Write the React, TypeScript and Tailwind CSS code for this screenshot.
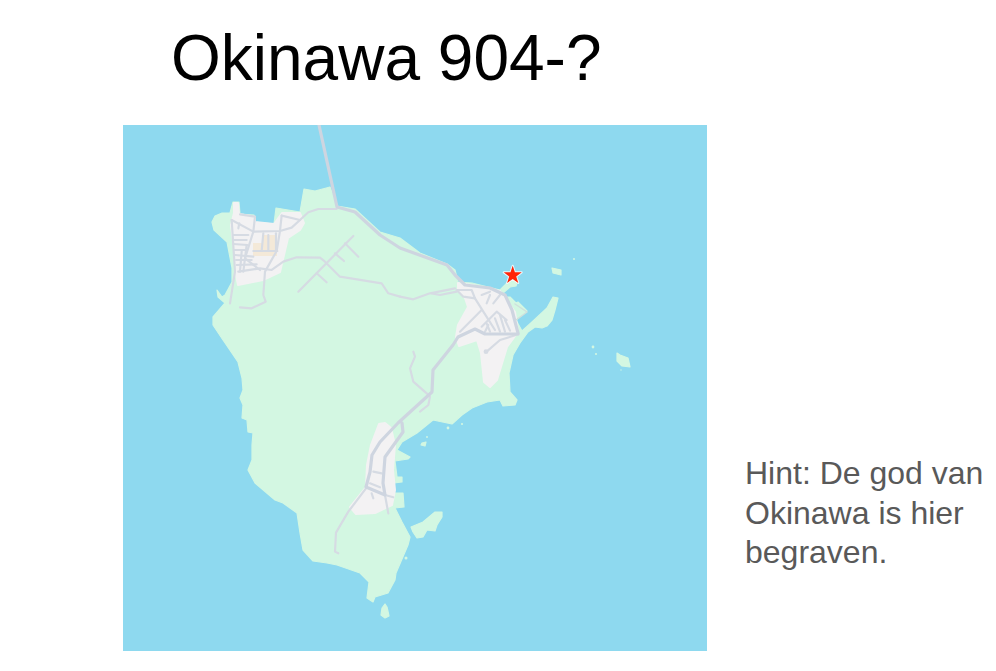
const COAST =
  "M233 202 L239 202 L240 214 L254 215 L255 222 L274 224 L276 208 L300 212 L304 189 L315 191 L330 187 L337 206 L355 209 L380 232 L400 238 L420 253 L447 264 L455 270 L458 282 L472 283 L500 290 L503 287 L508 282 L518 280 L516 286 L510 287 L503 293 L505 297 L510 297 L516 303 L518 302 L527 311 L516 320 L522 331 L532 322 L547 308 L553 297 L558 298 L555 310 L552 320 L547 326 L542 328 L535 327 L528 332 L520 343 L513 355 L509 373 L510 392 L517 400 L515 405 L503 406 L500 400 L487 402 L472 408 L462 415 L452 424 L433 420 L417 433 L402 442 L397 450 L410 457 L408 459 L395 461 L397 477 L402 477 L402 482 L394 483 L394 493 L403 493 L404 507 L395 508 L402 522 L410 537 L408 545 L396 573 L395 580 L388 593 L375 597 L373 602 L367 598 L369 582 L360 573 L337 565 L327 563 L313 561 L303 550 L300 533 L297 513 L283 503 L275 500 L255 483 L248 470 L252 460 L252 445 L253 433 L248 432 L247 420 L242 418 L243 405 L240 398 L243 390 L242 378 L238 362 L223 340 L213 325 L213 317 L225 303 L218 297 L217 290 L222 297 L225 295 L232 282 L232 268 L227 242 L214 230 L212 222 L215 216 L222 213 L230 213 Z";

const ISLANDS = [
  "M552 268 L561 270 L561 275 L553 273 Z",
  "M617 353 L620 355 L628 358 L630 367 L622 366 L617 361 Z",
  "M411 527 L423 522 L435 512 L442 512 L442 517 L437 525 L435 531 L427 530 L423 537 L417 538 L413 532 Z",
  "M422 443 L426 442 L425 446 L421 445 Z",
  "M385 604 L387 607 L389 616 L385 618 L381 615 L382 608 Z",
];

const DOTS: [number, number, number][] = [
  [574, 259, 1],
  [593, 347, 1.4],
  [596, 354, 1.1],
  [621, 370, 0.7],
  [448, 428, 1.4],
  [462, 424, 1.1],
  [406, 558, 1.5],
  [427, 437, 0.9],
];

const NW_ROADS = [
  "M95 285 L105 440 L90 535",
  "M95 285 L160 320 L240 318 L275 308 L300 285 L325 262 L355 252 L410 252",
  "M245 272 L240 318 L230 378 L195 440 L190 510 L197 530 L155 550 L120 547",
  "M245 272 L300 285",
  "M160 320 L135 400 L180 435",
  "M120 268 L165 275 L160 320",
  "M115 440 L180 430 L215 435 L250 410 L290 397 L360 398 L375 410 L420 455 L545 475 L565 505 L600 515",
  "M100 330 L145 330",
  "M100 345 L140 345",
  "M100 357 L142 360",
  "M102 375 L135 375",
  "M105 390 L160 395",
  "M108 405 L155 405",
  "M110 420 L170 418",
  "M115 310 L118 295",
  "M160 378 L232 378",
  "M190 325 L185 378",
  "M205 330 L205 378",
  "M228 325 L228 378",
  "M125 380 L120 440",
  "M140 360 L130 440",
  "M460 333 L295 500",
  "M435 355 L475 395",
  "M405 385 L432 408",
  "M350 445 L380 472",
];

const EAST_ROADS = [
  "M170 150 L215 150 L225 175 L250 215 L285 270",
  "M170 150 L190 170 L225 175",
  "M245 165 L270 155",
  "M260 190 L270 165",
  "M280 190 L300 165",
  "M180 275 L245 210",
  "M245 260 L290 215 L320 240",
  "M255 275 L265 255",
  "M270 275 L260 250",
  "M300 275 L285 235",
  "M315 275 L300 225",
  "M330 272 L315 240",
  "M355 283 L300 300 L260 335",
  "M0 170 L40 178 L90 160 L165 145",
  "M95 160 L120 165 L170 155",
];

const SOUTH_ROADS = [
  "M280 215 L305 220",
  "M270 250 L300 262",
  "M315 285 L325 340",
  "M275 280 L280 295",
  "M315 285 L340 292",
];

function OkinawaMap() {
  return (
    <svg viewBox="123 125 584 526" className="h-[526px] w-[584px] shrink-0 bg-[#8ed9ef]">
      <g className="blur-[0.6px]">
        <g fill="#d3f7e2" stroke="#d3f7e2" strokeWidth="1.2" strokeLinejoin="round">
          <path d={COAST} />
          {ISLANDS.map((d) => (
            <path key={d} d={d} />
          ))}
          {DOTS.map(([cx, cy, r]) => (
            <circle key={`${cx}-${cy}`} cx={cx} cy={cy} r={r} strokeWidth="0" />
          ))}
        </g>

        {/* built up areas */}
        <g fill="#f3f2f3" stroke="#f3f2f3" strokeWidth="2" strokeLinejoin="round">
          <path d="M234 213 L234 203 L238 203 L239 214 L255 217 L255 222 L274 224 L282 213 L300 213 L304 223 L300 230 L288 238 L280 272 L263 280 L238 285 L236 275 L234 248 L231 225 Z" />
          <path d="M458 283 L472 285 L500 291 L515 312 L518 332 L507 347 L497 380 L490 387 L484 382 L481 353 L477 340 L459 346 L456 337 L458 325 L468 307 L465 298 L458 290 Z" />
          <path d="M379 424 L385 423 L391 428 L395 445 L393 470 L395 490 L392 505 L375 513 L356 514 L350 507 L366 487 L367 465 L371 445 Z" />
        </g>
        <path d="M253 243 L262 243 L262 235 L277 235 L277 256 L253 256 Z" fill="#f4e9d8" />

        {/* minor roads */}
        <g fill="none" stroke="#d6dbe3" strokeLinejoin="round" strokeLinecap="round">
          <g transform="translate(200 125) scale(0.3333)" strokeWidth="6.5">
            {NW_ROADS.map((d) => (
              <path key={d} d={d} />
            ))}
          </g>
          <g transform="translate(400 240) scale(0.3333)" strokeWidth="6.5">
            {EAST_ROADS.map((d) => (
              <path key={d} d={d} />
            ))}
            <circle cx="258" cy="335" r="4" fill="#d6dbe3" />
            <path d="M40 335 L45 350 L30 385 L40 425 L80 460 L90 470 L85 495 L60 515" />
          </g>
          <g transform="translate(280 400) scale(0.3333)" strokeWidth="6.5">
            {SOUTH_ROADS.map((d) => (
              <path key={d} d={d} />
            ))}
            <path d="M258 265 L205 335 L168 398 L165 455 L175 460" />
          </g>
        </g>

        {/* main roads */}
        <g fill="none" stroke="#ced5e0" strokeWidth="3.2" strokeLinejoin="round" strokeLinecap="round">
          <path d="M319 125 L337 207 L355 212 L380 235 L400 248 L447 265 L455 275 L465 285 L490 288 L505 295 L512 310 L518 333" />
          <path d="M518 334 L485 334 L475 329 L458 337 L453 345 L433 370 L432 392 L398 423 L380 442 L372 455 L370 472 L366 487 L385 495 L383 483 L385 457 L403 432 L402 423" />
          <path d="M515 304 L527 312 L516 320" stroke="#cfe0dc" strokeWidth="1.5" />
        </g>
      </g>

      <polygon
        transform="translate(512.7 275.3)"
        points="0,-9.5 2.2,-3 9,-2.94 3.5,1.14 5.6,7.7 0,3.7 -5.6,7.7 -3.5,1.14 -9,-2.94 -2.2,-3"
        fill="#ff2408"
        stroke="#ffffff"
        strokeOpacity="0.8"
        strokeWidth="2"
        strokeLinejoin="round"
        paintOrder="stroke"
      />
    </svg>
  );
}

export default function App() {
  return (
    <div className="h-[671px] w-[996px] overflow-hidden bg-white font-['Liberation_Sans',Arial,sans-serif]">
      <header className="flex h-[125px] items-start pl-[171px] pt-[21px]">
        <h1 className="text-[64px] leading-[74px] text-black">Okinawa 904-?</h1>
      </header>
      <div className="flex pl-[123px]">
        <OkinawaMap />
        <p className="ml-[38px] mt-[329px] w-[245px] text-[32px] leading-[39.5px] text-[#595959]">
          Hint: De god van Okinawa is hier begraven.
        </p>
      </div>
    </div>
  );
}
